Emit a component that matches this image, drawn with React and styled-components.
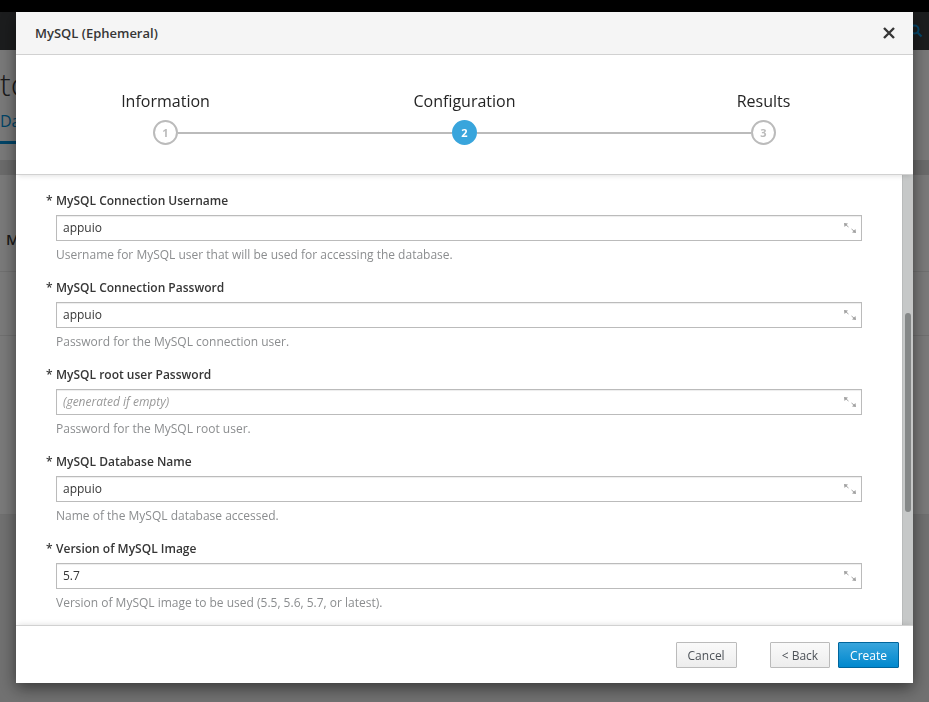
import React from "react";
import styled, { createGlobalStyle } from "styled-components";

const GlobalStyle = createGlobalStyle`
  html, body { margin: 0; padding: 0; }
  body {
    font-family: "Open Sans", "Liberation Sans", sans-serif;
    background: #f5f5f5;
    width: 929px;
    height: 702px;
    overflow: hidden;
  }
  * { box-sizing: border-box; }
`;

/* ---------- background page ---------- */
const Page = styled.div`
  width: 929px;
  height: 702px;
  display: flex;
  flex-direction: column;
  background: #e2e2e2;
`;
const TopStrip = styled.div`
  height: 12px;
  background: #000;
`;
const Navbar = styled.div`
  height: 38px;
  background: #383a3c;
  display: flex;
  justify-content: flex-end;
  align-items: center;
  padding-right: 6px;
  color: #0a8fd6;
`;
const PageHeader = styled.div`
  height: 110px;
  background: #f3f3f3;
  display: flex;
  flex-direction: column;
  padding-top: 14px;
`;
const PageTitle = styled.h1`
  margin: 0;
  font-weight: 300;
  font-size: 32px;
  line-height: 40px;
  color: #363636;
`;
const Tabs = styled.div`
  display: flex;
  margin-top: 6px;
`;
const Tab = styled.div`
  font-size: 16px;
  color: #0088ce;
  padding-bottom: 9px;
  border-bottom: 3px solid #0088ce;
`;
const Band = styled.div`
  height: 15px;
  background: #d6d6d6;
`;
const Row = styled.div`
  height: ${(p) => p.$h}px;
  background: #f5f5f5;
  border-bottom: 1px solid #e0e0e0;
  display: flex;
  align-items: flex-end;
  padding-bottom: ${(p) => p.$pb || 0}px;
  font-weight: 600;
  font-size: 15px;
  color: #363636;
  padding-left: 6px;
`;

/* ---------- modal ---------- */
const Backdrop = styled.div`
  position: fixed;
  inset: 12px 0 0 0;
  background: rgba(0, 0, 0, 0.5);
`;
const Modal = styled.div`
  position: fixed;
  top: 12px;
  left: 16px;
  width: 897px;
  height: 671px;
  background: #fff;
  box-shadow: 0 5px 15px rgba(0, 0, 0, 0.5);
  display: flex;
  flex-direction: column;
  color: #363636;
`;
const Header = styled.div`
  height: 43px;
  flex: none;
  background: #f5f5f5;
  border-bottom: 1px solid #d1d1d1;
  display: flex;
  align-items: center;
  justify-content: space-between;
  padding: 0 18px 0 19px;
`;
const ModalTitle = styled.div`
  font-size: 13px;
  font-weight: 600;
  color: #363636;
`;
const CloseBtn = styled.div`
  width: 12px;
  height: 12px;
  display: flex;
`;

const Steps = styled.div`
  height: 120px;
  flex: none;
  border-bottom: 1px solid #d1d1d1;
  display: grid;
  grid-template-columns: repeat(3, 1fr);
  padding-top: 35px;
  position: relative;
  z-index: 1;
  box-shadow: 0 3px 5px -2px rgba(0, 0, 0, 0.12);
`;
const Step = styled.div`
  display: flex;
  flex-direction: column;
  align-items: stretch;
`;
const StepLabel = styled.div`
  font-size: 16px;
  line-height: 22px;
  text-align: center;
  color: #252525;
`;
const CircleRow = styled.div`
  margin-top: 8px;
  display: flex;
  align-items: center;
`;
const Segment = styled.div`
  flex: 1;
  height: 2px;
  background: ${(p) => (p.$hidden ? "transparent" : "#bbbbbb")};
`;
const Circle = styled.div`
  width: 25px;
  height: 25px;
  border-radius: 50%;
  flex: none;
  display: flex;
  align-items: center;
  justify-content: center;
  font-size: 11px;
  font-weight: 700;
  background: ${(p) => (p.$active ? "#39a5dc" : "#fff")};
  border: 2px solid ${(p) => (p.$active ? "#39a5dc" : "#bbbbbb")};
  color: ${(p) => (p.$active ? "#fff" : "#bbbbbb")};
`;

const Body = styled.div`
  flex: 1;
  display: flex;
  min-height: 0;
`;
const Content = styled.div`
  flex: 1;
  padding: 17px 40px 0 30px;
  overflow: hidden;
`;
const ScrollTrack = styled.div`
  width: 11px;
  flex: none;
  background: #c6c8c8;
  border-left: 1px solid #b9bbbb;
  display: flex;
  justify-content: center;
`;
const ScrollThumb = styled.div`
  margin-top: 138px;
  width: 6px;
  height: 199px;
  border-radius: 3px;
  background: #858888;
`;

const Group = styled.div`
  margin-bottom: 16px;
  padding-left: 10px;
`;
const Label = styled.div`
  display: flex;
  font-size: 12px;
  font-weight: 600;
  line-height: 17px;
  margin-bottom: 6px;
  margin-left: -10px;
  color: #363636;
`;
const Asterisk = styled.span`
  width: 10px;
  flex: none;
`;
const InputBox = styled.div`
  height: 26px;
  border: 1px solid #bbbbbb;
  box-shadow: inset 0 1px 1px rgba(3, 3, 3, 0.075);
  display: flex;
  align-items: center;
  padding: 0 5px 0 6px;
`;
const Input = styled.input`
  flex: 1;
  border: none;
  outline: none;
  background: transparent;
  font-family: "Open Sans", "Liberation Sans", sans-serif;
  font-size: 12px;
  line-height: 17px;
  color: #363636;
  padding: 0 0 1px 0;
  &::placeholder {
    color: #999;
    font-style: italic;
  }
`;
const Help = styled.div`
  font-size: 12px;
  line-height: 17px;
  margin-top: 5px;
  color: #8b8d8f;
`;

const Footer = styled.div`
  height: 58px;
  flex: none;
  border-top: 1px solid #d1d1d1;
  display: flex;
  justify-content: flex-end;
  align-items: center;
  padding: 1px 14px 0 0;
  position: relative;
  box-shadow: 0 -3px 5px -2px rgba(0, 0, 0, 0.1);
`;
const Button = styled.button`
  height: 26px;
  padding: 0 11px;
  font-family: "Open Sans", "Liberation Sans", sans-serif;
  font-size: 12px;
  border-radius: 1px;
  margin-right: ${(p) => p.$mr || 0}px;
  background: ${(p) =>
    p.$primary
      ? "linear-gradient(#39a5dc 0%, #0088ce 100%)"
      : "linear-gradient(#fafafa 0%, #ededed 100%)"};
  border: 1px solid ${(p) => (p.$primary ? "#00659c" : "#bbbbbb")};
  color: ${(p) => (p.$primary ? "#fff" : "#4d5258")};
`;

const ResizeIcon = () => (
  <svg width="12" height="10" viewBox="0 0 12 10">
    <polygon points="0,0 4,0.5 0.5,4" fill="#a0a0a0" />
    <line x1="1.5" y1="1.5" x2="4.5" y2="4" stroke="#a0a0a0" strokeWidth="1" />
    <polygon points="12,10 8,9.5 11.5,6" fill="#a0a0a0" />
    <line x1="10.5" y1="8.5" x2="7.5" y2="6" stroke="#a0a0a0" strokeWidth="1" />
  </svg>
);

const SearchIcon = () => (
  <svg width="14" height="14" viewBox="0 0 14 14">
    <circle cx="5.5" cy="5.5" r="4" fill="none" stroke="currentColor" strokeWidth="2" />
    <line x1="8.5" y1="8.5" x2="12.5" y2="12.5" stroke="currentColor" strokeWidth="2.2" />
  </svg>
);

const fields = [
  {
    label: "MySQL Connection Username",
    value: "appuio",
    help: "Username for MySQL user that will be used for accessing the database.",
  },
  {
    label: "MySQL Connection Password",
    value: "appuio",
    help: "Password for the MySQL connection user.",
  },
  {
    label: "MySQL root user Password",
    value: "",
    placeholder: "(generated if empty)",
    help: "Password for the MySQL root user.",
  },
  {
    label: "MySQL Database Name",
    value: "appuio",
    help: "Name of the MySQL database accessed.",
  },
  {
    label: "Version of MySQL Image",
    value: "5.7",
    help: "Version of MySQL image to be used (5.5, 5.6, 5.7, or latest).",
  },
];

const steps = [
  { label: "Information", n: 1 },
  { label: "Configuration", n: 2, active: true },
  { label: "Results", n: 3 },
];

export default function App() {
  return (
    <>
      <GlobalStyle />
      <Page>
        <TopStrip />
        <Navbar>
          <SearchIcon />
        </Navbar>
        <PageHeader>
          <PageTitle>to</PageTitle>
          <Tabs>
            <Tab>Dat</Tab>
          </Tabs>
        </PageHeader>
        <Band />
        <Row $h={97} $pb={22}>M</Row>
        <Row $h={64} />
        <Row $h={179} />
      </Page>
      <Backdrop />
      <Modal>
        <Header>
          <ModalTitle>MySQL (Ephemeral)</ModalTitle>
          <CloseBtn>
            <svg width="12" height="12" viewBox="0 0 12 12">
              <path d="M1 1 L11 11 M11 1 L1 11" stroke="#363636" strokeWidth="2.4" />
            </svg>
          </CloseBtn>
        </Header>
        <Steps>
          {steps.map((s, i) => (
            <Step key={s.n}>
              <StepLabel>{s.label}</StepLabel>
              <CircleRow>
                <Segment $hidden={i === 0} />
                <Circle $active={s.active}>{s.n}</Circle>
                <Segment $hidden={i === steps.length - 1} />
              </CircleRow>
            </Step>
          ))}
        </Steps>
        <Body>
          <Content>
            {fields.map((f) => (
              <Group key={f.label}>
                <Label>
                  <Asterisk>*</Asterisk>
                  {f.label}
                </Label>
                <InputBox>
                  <Input
                    readOnly
                    defaultValue={f.value}
                    placeholder={f.placeholder}
                  />
                  <ResizeIcon />
                </InputBox>
                <Help>{f.help}</Help>
              </Group>
            ))}
          </Content>
          <ScrollTrack>
            <ScrollThumb />
          </ScrollTrack>
        </Body>
        <Footer>
          <Button $mr={33}>Cancel</Button>
          <Button $mr={8}>&lt; Back</Button>
          <Button $primary>Create</Button>
        </Footer>
      </Modal>
    </>
  );
}
